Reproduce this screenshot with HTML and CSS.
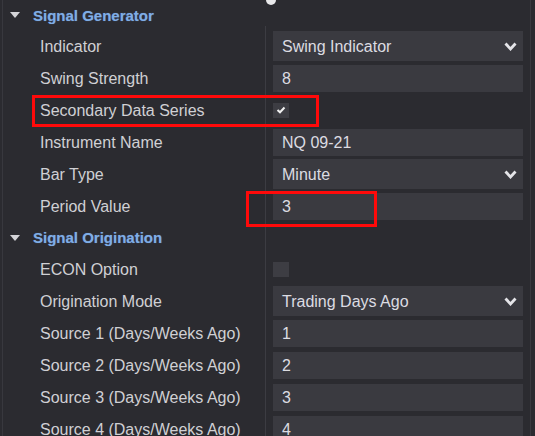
FILE: index.html
```html
<!DOCTYPE html>
<html>
<head>
<meta charset="utf-8">
<link rel="stylesheet" href="styles.css">
</head>
<body>
<div class="panel">
  <div class="grid">
    <div class="cat first"><span class="tri"></span><span class="cat-title">Signal Generator</span><span class="col-line"></span></div>
    <div class="row"><div class="name">Indicator</div><div class="val"><div class="select"><span>Swing Indicator</span><svg class="chev" width="13" height="9" viewBox="0 0 13 9"><path d="M1.5 1.5 L6.5 7 L11.5 1.5" fill="none" stroke="#e4e4e8" stroke-width="2.8"/></svg></div></div></div>
    <div class="row"><div class="name">Swing Strength</div><div class="val"><div class="text">8</div></div></div>
    <div class="row"><div class="name">Secondary Data Series</div><div class="val"><div class="check"><svg width="10" height="8" viewBox="0 0 10 8"><path d="M1.5 4 L4 6.3 L8.5 1.5" fill="none" stroke="#f0f0f0" stroke-width="2"/></svg></div></div></div>
    <div class="row"><div class="name">Instrument Name</div><div class="val"><div class="text">NQ 09-21</div></div></div>
    <div class="row"><div class="name">Bar Type</div><div class="val"><div class="select"><span>Minute</span><svg class="chev" width="13" height="9" viewBox="0 0 13 9"><path d="M1.5 1.5 L6.5 7 L11.5 1.5" fill="none" stroke="#e4e4e8" stroke-width="2.8"/></svg></div></div></div>
    <div class="row"><div class="name">Period Value</div><div class="val"><div class="text">3</div></div></div>
    <div class="cat second"><span class="tri"></span><span class="cat-title">Signal Origination</span><span class="col-line"></span></div>
    <div class="row"><div class="name">ECON Option</div><div class="val"><div class="check"></div></div></div>
    <div class="row"><div class="name">Origination Mode</div><div class="val"><div class="select"><span>Trading Days Ago</span><svg class="chev" width="13" height="9" viewBox="0 0 13 9"><path d="M1.5 1.5 L6.5 7 L11.5 1.5" fill="none" stroke="#e4e4e8" stroke-width="2.8"/></svg></div></div></div>
    <div class="row"><div class="name">Source 1 (Days/Weeks Ago)</div><div class="val"><div class="text">1</div></div></div>
    <div class="row"><div class="name">Source 2 (Days/Weeks Ago)</div><div class="val"><div class="text">2</div></div></div>
    <div class="row"><div class="name">Source 3 (Days/Weeks Ago)</div><div class="val"><div class="text">3</div></div></div>
    <div class="row"><div class="name">Source 4 (Days/Weeks Ago)</div><div class="val"><div class="text">4</div></div></div>
  </div>
  <div class="knob"></div>
  <div class="mark mark-series"></div>
  <div class="mark mark-period"></div>
</div>
</body>
</html>
```
FILE: styles.css
```css
html, body {
  margin: 0;
  padding: 0;
  background: #2b2b30;
}
.panel {
  position: relative;
  width: 535px;
  height: 436px;
  overflow: hidden;
  background: #2b2b30;
  font-family: "Liberation Sans", Arial, sans-serif;
}
.grid {
  width: 527px;
  margin-left: 2px;
  border-left: 1px solid #38383e;
  border-right: 1px solid #3a3a40;
  height: 436px;
}
.cat {
  position: relative;
  display: flex;
  align-items: center;
  height: 30px;
}
.cat.second {
  height: 31px;
}
.tri {
  width: 0;
  height: 0;
  margin-left: 7px;
  border-left: 5.5px solid transparent;
  border-right: 5.5px solid transparent;
  border-top: 6px solid #d4d4d8;
}
.cat-title {
  margin-left: 13px;
  font-size: 15px;
  font-weight: bold;
  color: #7fade6;
  text-shadow: 0 0 1px rgba(120, 170, 240, 0.5);
}
.col-line {
  position: absolute;
  left: 262px;
  bottom: 0;
  width: 1px;
  height: 4px;
  background: #3c3c42;
}
.cat.second .col-line { height: 31px; }
.row {
  display: grid;
  grid-template-columns: 262px 1fr;
  height: 32px;
}
.name {
  display: flex;
  align-items: center;
  padding-left: 37px;
  padding-top: 2px;
  font-size: 16px;
  color: #d0d0d4;
  white-space: nowrap;
}
.val {
  display: flex;
  align-items: center;
  border-left: 1px solid #3c3c42;
  padding-left: 7px;
}
.text, .select {
  box-sizing: border-box;
  width: 250px;
  display: flex;
  align-items: center;
  padding-left: 9px;
  padding-top: 2px;
  font-size: 16px;
  color: #dcdce2;
  background: #3a3a40;
}
.text {
  height: 27px;
}
.select {
  height: 30px;
  justify-content: space-between;
  padding-right: 6px;
}
.chev {
  display: block;
  margin-top: -2px;
}
.check {
  width: 16px;
  height: 15px;
  background: #3d3d43;
  display: flex;
  align-items: center;
  justify-content: center;
}
.knob {
  position: absolute;
  left: 266px;
  top: -5px;
  width: 10px;
  height: 10px;
  border-radius: 50%;
  background: #e8e8ea;
}
.mark {
  position: absolute;
  box-sizing: border-box;
  border: 3px solid #ff0a0a;
}
.mark-series {
  left: 32px;
  top: 95px;
  width: 287px;
  height: 32px;
}
.mark-period {
  left: 246px;
  top: 191px;
  width: 131px;
  height: 36px;
}
```
